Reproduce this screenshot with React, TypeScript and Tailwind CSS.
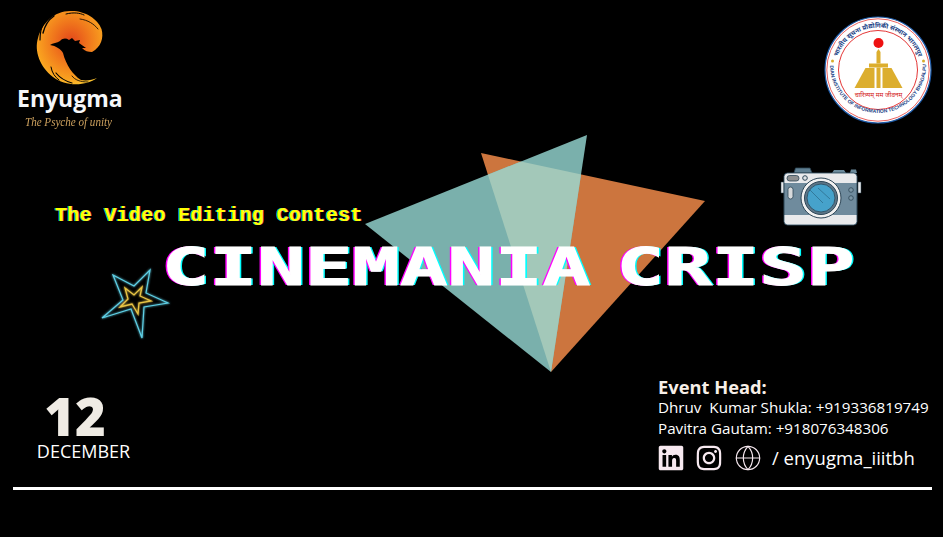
import React from "react";
import { FaLinkedin, FaInstagram } from "react-icons/fa";
import { Globe } from "lucide-react";

function Phoenix() {
  return (
    <svg viewBox="0 0 90 85" className="w-[90px] h-[85px] shrink-0">
      <defs>
        <radialGradient id="ph" cx="0.52" cy="0.42" r="0.6">
          <stop offset="0" stopColor="#e2461b" />
          <stop offset="0.45" stopColor="#f0761c" />
          <stop offset="0.85" stopColor="#f9a11f" />
          <stop offset="1" stopColor="#fcc22e" />
        </radialGradient>
      </defs>
      <path
        fill="url(#ph)"
        d="M77 73C66 81 46 82 33 72C20 62 14 46 18 33C22 18 35 5 52 6C65 6 78 14 81.500 24C84 33 81 42 72 47C68 47 65 46 62 43L66 43L59 38L60 35L55 36L52 33L49 35C46 33 43 33 40 36C37 38 33 38 30 40C36 41 41 44 43 48C46 60 53 70 61 75C67 76 72 75 77 73Z"
      />
      <g fill="none" stroke="#000" strokeLinecap="round">
        <path d="M34 11C28 15 25 20 23 28" strokeWidth="1.4" />
        <path d="M23 20C20 25 20 30 20 35" strokeWidth="1.2" />
        <path d="M46 9C54 7 60 8 64 10" strokeWidth="1" />
        <path d="M60 14C68 15 74 19 78 24" strokeWidth="0.8" />
        <path d="M36 68C40 73 45 76 52 78" strokeWidth="1.2" />
        <path d="M31 62C32 68 35 72 39 75" strokeWidth="1" />
        <path d="M52 71C55 75 60 77 68 77" strokeWidth="0.8" />
      </g>
    </svg>
  );
}

function Emblem() {
  return (
    <svg viewBox="0 0 110 110" className="w-[110px] h-[110px]">
      <circle cx="55" cy="55" r="53" fill="#fff" stroke="#1d5aa8" strokeWidth="1.2" />
      <circle cx="55" cy="55" r="51.2" fill="none" stroke="#e53935" strokeWidth="0.8" />
      <circle cx="55" cy="55" r="39.5" fill="#fff" stroke="#e02020" strokeWidth="0.9" />
      <circle cx="55.5" cy="28" r="5" fill="#ee1111" />
      <circle cx="9.5" cy="46" r="1.5" fill="#d9ad2c" />
      <circle cx="100.5" cy="46" r="1.5" fill="#d9ad2c" />
      <defs>
        <path id="arcTop" d="M13.5 46A42.5 42.5 0 0 1 96.500 46" />
        <path id="arcBot" d="M7 50A48 48 0 1 0 103 50" />
      </defs>
      <text fontSize="6.4" fill="#1a3f86" fontFamily="'Noto Sans','Noto Sans CJK SC',sans-serif" fontWeight="700">
        <textPath href="#arcTop" startOffset="50%" textAnchor="middle">भारतीय सूचना प्रौद्योगिकी संस्थान भागलपुर</textPath>
      </text>
      <text fontSize="5" fill="#1a3f86" fontFamily="'Liberation Sans',sans-serif" fontWeight="700">
        <textPath href="#arcBot" startOffset="50%" textAnchor="middle">INDIAN INSTITUTE OF INFORMATION TECHNOLOGY BHAGALPUR</textPath>
      </text>
      <g fill="#dcae2e">
        <path d="M53.500 37L55.500 34L57.500 37V48.500H53.500Z" />
        <path d="M46 48.500H65V52.500H46Z" />
        <path d="M53.500 52.500H57.500V73H53.500Z" />
        <path d="M42.500 53H51.500V73H31.500Z" />
        <path d="M59.500 53H68.500L79.500 73H59.500Z" />
      </g>
      <text x="55.5" y="82" textAnchor="middle" fontSize="6.4" fill="#d32020" fontFamily="'Noto Sans','Noto Sans CJK SC',sans-serif">चारित्र्यम् मम जीवनम्</text>
    </svg>
  );
}

function Camera() {
  return (
    <svg viewBox="0 0 82 62" className="w-[82px] h-[62px]">
      <path d="M14 8L15.500 3H30L32 8Z" fill="#5f7f92" stroke="#2d4657" strokeWidth="0.8" />
      <path d="M52 8L54 5H64L66 8Z M70 8L71 4.500H76L77 8Z" fill="#6b8a9b" />
      <path d="M1 17H4V28H1Z M78 17H81V28H78Z" fill="#e9eaec" stroke="#2d4657" strokeWidth="0.5" />
      <rect x="4" y="8" width="73" height="52" rx="3.500" fill="#6f8b9d" stroke="#2d4657" strokeWidth="1" />
      <path d="M4.500 18V11.500C4.500 10 6 8.500 7.500 8.500H73.500C75 8.500 76.500 10 76.500 11.500V18Z" fill="#e9eaec" />
      <path d="M4.500 50V56.500C4.500 58 6 59.500 7.500 59.500H73.500C75 59.500 76.500 58 76.500 56.500V50Z" fill="#e9eaec" />
      <rect x="7" y="10.500" width="12" height="5.500" rx="2.700" fill="#8d8f90" stroke="#2d4657" strokeWidth="0.8" />
      <circle cx="25" cy="13" r="2.300" fill="#dfe3e6" stroke="#2d4657" strokeWidth="1" />
      <rect x="8" y="22" width="5" height="12" rx="2.500" fill="#d7dadc" stroke="#2d4657" strokeWidth="0.8" />
      <circle cx="41" cy="33" r="20" fill="#f1f1f1" stroke="#2d4657" strokeWidth="1" />
      <circle cx="41" cy="33" r="16.500" fill="#5d7688" stroke="#2d4657" strokeWidth="1" />
      <circle cx="41" cy="33" r="14" fill="#46a2cb" stroke="#2d4657" strokeWidth="0.8" />
      <path d="M30 25L43 38M38 23L50 34" stroke="#2d6f8e" strokeWidth="0.8" fill="none" />
      <circle cx="71" cy="25" r="2.300" fill="#7d97a6" stroke="#2d4657" strokeWidth="0.8" />
      <circle cx="71" cy="33" r="2.300" fill="#7d97a6" stroke="#2d4657" strokeWidth="0.8" />
    </svg>
  );
}

function Star() {
  return (
    <svg viewBox="0 0 80 80" className="w-[80px] h-[80px]">
      <defs>
        <filter id="glow" x="-20%" y="-20%" width="140%" height="140%">
          <feGaussianBlur stdDeviation="1.100" result="b" />
          <feMerge>
            <feMergeNode in="b" />
            <feMergeNode in="SourceGraphic" />
          </feMerge>
        </filter>
      </defs>
      <g fill="none" strokeLinejoin="miter" filter="url(#glow)">
        <path d="M18 13L39 24L55 8L51 31L73 41L49 45L47 76L36 47L7 56L28 38Z" stroke="#5fd0e6" strokeWidth="1.200" />
        <path d="M30 26L39 33L47 25L45 34L56 39L44 41L43 52L37 42L25 45L33 37Z" stroke="#e8c445" strokeWidth="1.300" />
      </g>
    </svg>
  );
}

export default function App() {
  return (
    <div className="relative w-[943px] h-[537px] overflow-hidden bg-black text-white flex flex-col font-['Open_Sans',sans-serif]">
      <svg viewBox="0 0 943 537" className="absolute inset-0 w-[943px] h-[537px]">
        <clipPath id="orangeClip"><polygon points="481,153 705,201 551,372" /></clipPath>
        <polygon points="481,153 705,201 551,372" fill="#cc753e" />
        <polygon points="365,224 587,135 551,372" fill="#7ab0ac" />
        <polygon points="365,224 587,135 551,372" fill="#a3c8b9" clipPath="url(#orangeClip)" />
      </svg>

      <header className="relative h-[135px] shrink-0 flex justify-between pl-[17px] pr-[10px]">
        <div className="flex flex-col pt-[5px] w-[110px]">
          <div className="ml-[3px]"><Phoenix /></div>
          <div className="font-bold text-[23px] leading-[24px] -mt-[4px] text-[#f5f7fa]">Enyugma</div>
          <div className="ml-[8px] mt-[4px] origin-left scale-x-[0.82] font-['Liberation_Serif',serif] italic text-[13.500px] leading-[15px] text-[#cda15e] whitespace-nowrap">The Psyche of unity</div>
        </div>
        <div className="pt-[15px]"><Emblem /></div>
      </header>

      <main className="relative flex-1 min-h-0">
        <div className="absolute left-[780px] top-[30px]"><Camera /></div>
        <div className="absolute left-[95px] top-[127px]"><Star /></div>
        <div className="pl-[55px] pt-[69px] font-['Liberation_Mono',monospace] font-bold text-[20px] leading-[24px] tracking-[0.3px] text-[#ffff00] whitespace-nowrap [text-shadow:-0.7px_0_#00e5ff,0.7px_0_#ff6060]">
          The Video Editing Contest
        </div>
        <div className="pl-[162px] mt-[14px] h-[46px]">
          <div className="origin-left scale-x-[1.52] whitespace-nowrap font-['DejaVu_Sans_Mono',monospace] font-bold text-[52px] leading-[50px] [word-spacing:-14px] [-webkit-text-stroke:1px_#fff] [text-shadow:-1.5px_0_#ff00ff,1.5px_0_#00ffff]">
            CINEMANIA CRISP
          </div>
        </div>
      </main>

      <footer className="relative shrink-0 flex justify-between items-start pl-[37px] pr-[14px]">
        <div className="flex flex-col items-center w-[93px] pt-[15px]">
          <div className="font-extrabold text-[52.500px] leading-[48px] text-[#efebe4] mr-[17px]">12</div>
          <div className="text-[18px] leading-[22px]">DECEMBER</div>
        </div>
        <div className="flex flex-col w-[271px]">
          <div className="font-bold text-[18.300px] leading-[20px] text-[#f7efe8]">Event Head:</div>
          <div className="text-[15.200px] leading-[21px] whitespace-nowrap">Dhruv&nbsp; Kumar Shukla: +919336819749</div>
          <div className="text-[15.200px] leading-[21px] whitespace-nowrap">Pavitra Gautam: +918076348306</div>
          <div className="flex items-center mt-[5px] h-[28px]">
            <FaLinkedin className="w-[26px] h-[28px] text-[#f7e9f0]" />
            <FaInstagram className="w-[28px] h-[28px] ml-[11px] text-[#f7e9f0]" />
            <Globe className="w-[28px] h-[28px] ml-[11px] text-[#f7e9f0]" strokeWidth={1} />
            <div className="ml-[10px] text-[18.500px] leading-[24px] whitespace-nowrap">/ enyugma_iiitbh</div>
          </div>
        </div>
      </footer>

      <div className="ml-[13px] mr-[11px] mt-[15px] mb-[47px] h-[3px] bg-white shrink-0" />
    </div>
  );
}
